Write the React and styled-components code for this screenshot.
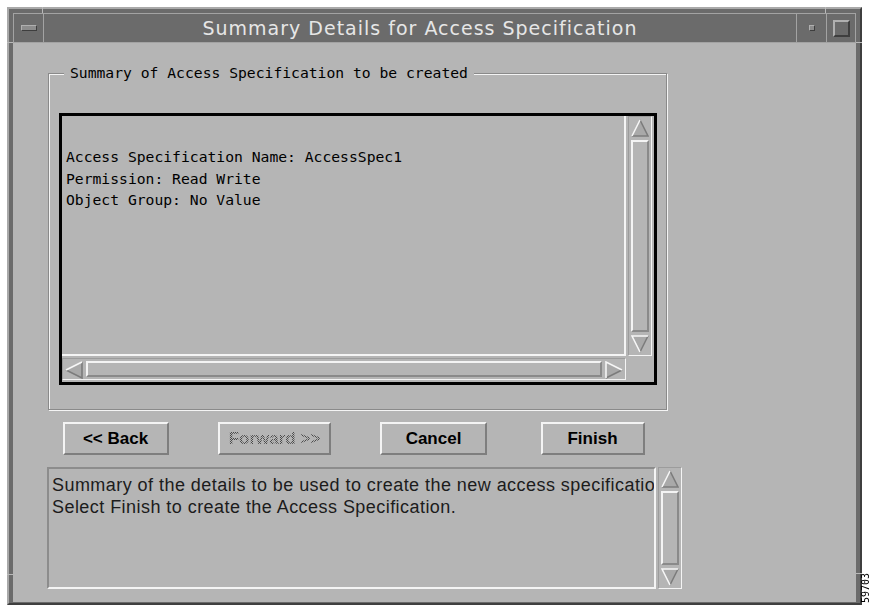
import React from "react";
import styled, { createGlobalStyle } from "styled-components";

const GlobalStyle = createGlobalStyle`
  html, body {
    margin: 0;
    padding: 0;
    background: #ffffff;
    width: 870px;
    height: 605px;
    overflow: hidden;
  }
  #root { height: 100%; }
`;

const GRAY = "#b5b5b5";
const LIGHT = "#f4f4f4";
const SHADE = "#7e7e7e";

const Page = styled.div`
  display: flex;
  align-items: stretch;
  height: 605px;
  padding: 7px 0 0 7px;
  box-sizing: border-box;
`;

const Frame = styled.div`
  position: relative;
  width: 855px;
  box-sizing: border-box;
  display: flex;
  flex-direction: column;
  background: #6b6b6b;
  border-style: solid;
  border-width: 2px;
  border-color: #a9a9a9 #3f3f3f #3f3f3f #a9a9a9;
  padding: 4px 4px 1px 4px;
`;

/* resize-handle notches cut into the window border */
const Notch = styled.span`
  position: absolute;
  background: #b9b9b9;
  width: ${(p) => (p.$h ? "6px" : "1px")};
  height: ${(p) => (p.$h ? "1px" : "6px")};
`;

const TitleBar = styled.div`
  display: flex;
  height: 30px;
  box-sizing: border-box;
  border: 1px solid #a3a3a3;
  background: #6b6b6b;
`;

const WinButton = styled.div`
  width: ${(p) => p.$w}px;
  flex: none;
  display: flex;
  align-items: center;
  justify-content: center;
  border-left: ${(p) => (p.$sepLeft ? "1px solid #a3a3a3" : "none")};
  border-right: ${(p) => (p.$sepRight ? "1px solid #a3a3a3" : "none")};
`;

const Raised = styled.div`
  box-sizing: border-box;
  width: ${(p) => p.$w}px;
  height: ${(p) => p.$h}px;
  background: ${(p) => p.$fill || "#6b6b6b"};
  border-style: solid;
  border-width: ${(p) => p.$bw || 1}px;
  border-color: #b0b0b0 #3e3e3e #3e3e3e #b0b0b0;
`;

const Title = styled.div`
  flex: 1;
  text-align: center;
  font-family: "DejaVu Sans", "Liberation Sans", sans-serif;
  font-size: 19px;
  letter-spacing: 1px;
  line-height: 28px;
  color: #e6e6e6;
  white-space: nowrap;
`;

const Body = styled.div`
  flex: 1;
  background: ${GRAY};
  display: flex;
  flex-direction: column;
  align-items: flex-start;
  padding-top: 22px;
`;

const Group = styled.fieldset`
  margin: 0 0 0 35px;
  min-width: 0;
  width: 619px;
  box-sizing: border-box;
  padding: 32px 9px 24px 10px;
  border: 1px solid #8a8a8a;
  box-shadow: inset 1px 1px ${LIGHT}, 1px 1px ${LIGHT};
`;

const Legend = styled.legend`
  margin-left: 5px;
  padding: 0 6px;
  background: ${GRAY};
  font-family: "DejaVu Sans Mono", "Liberation Mono", monospace;
  font-size: 14.7px;
  line-height: 16px;
  color: #000;
`;

const ListBox = styled.div`
  width: 598px;
  height: 272px;
  box-sizing: border-box;
  border: 3px solid #000;
  display: grid;
  grid-template-columns: 564px 24px;
  grid-template-rows: 240px 22px;
  gap: 2px;
  padding: 0 2px 2px 0;
`;

const ListText = styled.div`
  box-sizing: border-box;
  border-right: 2px solid ${LIGHT};
  border-bottom: 2px solid ${LIGHT};
  padding: 30px 0 0 4px;
  font-family: "DejaVu Sans Mono", "Liberation Mono", monospace;
  font-size: 14.7px;
  line-height: 21.5px;
  color: #000;
  white-space: pre;
  overflow: hidden;
`;

const Corner = styled.div``;

const Trough = styled.div`
  box-sizing: border-box;
  display: flex;
  flex-direction: ${(p) => (p.$horizontal ? "row" : "column")};
  gap: 3px;
  padding: 2px;
  background: ${GRAY};
  border-style: solid;
  border-width: 1px;
  border-color: #9c9c9c ${LIGHT} ${LIGHT} #9c9c9c;
`;

const Thumb = styled.div`
  flex: 1;
  box-sizing: border-box;
  background: ${GRAY};
  border-style: solid;
  border-width: 2px;
  border-color: ${LIGHT} #8a8a8a #8a8a8a ${LIGHT};
`;

const ArrowBox = styled.svg`
  flex: none;
  display: block;
  width: 18px;
  height: 18px;
`;

const ARROWS = {
  up: { pts: "9,1 17,17 1,17", light: ["1,17 9,1"], dark: ["9,1 17,17 1,17"] },
  down: { pts: "1,1 17,1 9,17", light: ["9,17 1,1 17,1"], dark: ["17,1 9,17"] },
  left: { pts: "1,9 17,1 17,17", light: ["1,9 17,1"], dark: ["17,1 17,17 1,9"] },
  right: { pts: "1,1 17,9 1,17", light: ["1,17 1,1 17,9"], dark: ["17,9 1,17"] },
};

function Arrow({ dir }) {
  const a = ARROWS[dir];
  return (
    <ArrowBox viewBox="0 0 18 18">
      <polygon points={a.pts} fill="#a9a9a9" />
      {a.dark.map((p) => (
        <polyline key={p} points={p} fill="none" stroke="#7c7c7c" strokeWidth="1.6" />
      ))}
      {a.light.map((p) => (
        <polyline key={p} points={p} fill="none" stroke="#f6f6f6" strokeWidth="1.6" />
      ))}
    </ArrowBox>
  );
}

function ScrollBar({ horizontal }) {
  return (
    <Trough $horizontal={horizontal}>
      <Arrow dir={horizontal ? "left" : "up"} />
      <Thumb />
      <Arrow dir={horizontal ? "right" : "down"} />
    </Trough>
  );
}

const ButtonRow = styled.div`
  margin: 12px 0 0 23px;
  display: grid;
  grid-template-columns: repeat(4, 159px);
`;

const PushButton = styled.button`
  justify-self: center;
  width: ${(p) => p.$w}px;
  height: 33px;
  box-sizing: border-box;
  padding: 0;
  background: ${GRAY};
  border-style: solid;
  border-width: 2px;
  border-color: ${LIGHT} ${SHADE} ${SHADE} ${LIGHT};
  font-family: "Liberation Sans", Arial, sans-serif;
  font-weight: bold;
  font-size: 17px;
  color: #000;
`;

const Stippled = styled.span`
  background-image: repeating-conic-gradient(#4a4a4a 0 25%, transparent 0 50%);
  background-size: 2px 2px;
  -webkit-background-clip: text;
  background-clip: text;
  color: transparent;
`;

const MessageBox = styled.div`
  margin: 12px 0 0 34px;
  width: 635px;
  height: 122px;
  display: grid;
  grid-template-columns: 609px 24px;
  gap: 2px;
`;

const MessageText = styled.div`
  box-sizing: border-box;
  border-style: solid;
  border-width: 2px;
  border-color: #8c8c8c ${LIGHT} ${LIGHT} #8c8c8c;
  padding: 5px 0 0 3px;
  font-family: "Liberation Sans", Arial, sans-serif;
  font-size: 18px;
  letter-spacing: 0.45px;
  line-height: 22px;
  color: #1c1c1c;
  white-space: nowrap;
  overflow: hidden;
`;

const SideNote = styled.div`
  align-self: flex-end;
  writing-mode: vertical-rl;
  transform: rotate(180deg);
  font-family: "DejaVu Sans Mono", monospace;
  font-size: 10px;
  line-height: 8px;
  color: #000;
  margin: 0 0 2px 0;
`;

export default function App() {
  return (
    <>
      <GlobalStyle />
      <Page>
        <Frame>
          <Notch style={{ left: 33, top: -2 }} />
          <Notch style={{ left: 816, top: -2 }} />
          <Notch $h style={{ left: -2, top: 33 }} />
          <Notch $h style={{ right: -2, top: 33 }} />
          <Notch $h style={{ left: -2, top: 565 }} />
          <Notch $h style={{ right: -2, top: 564 }} />
          <TitleBar>
            <WinButton $w={29} $sepRight>
              <Raised $w={16} $h={6} $fill="#8c8c8c" />
            </WinButton>
            <Title>Summary Details for Access Specification</Title>
            <WinButton $w={29} $sepLeft>
              <Raised $w={6} $h={6} $fill="#8c8c8c" />
            </WinButton>
            <WinButton $w={28} $sepLeft>
              <Raised $w={17} $h={17} $bw={2} />
            </WinButton>
          </TitleBar>
          <Body>
            <Group>
              <Legend>Summary of Access Specification to be created</Legend>
              <ListBox>
                <ListText>
                  {"Access Specification Name: AccessSpec1\nPermission: Read Write\nObject Group: No Value"}
                </ListText>
                <ScrollBar />
                <ScrollBar horizontal />
                <Corner />
              </ListBox>
            </Group>
            <ButtonRow>
              <PushButton $w={106}>&lt;&lt; Back</PushButton>
              <PushButton $w={113} disabled>
                <Stippled>Forward &gt;&gt;</Stippled>
              </PushButton>
              <PushButton $w={107}>Cancel</PushButton>
              <PushButton $w={104}>Finish</PushButton>
            </ButtonRow>
            <MessageBox>
              <MessageText>
                Summary of the details to be used to create the new access specificatio
                <br />
                Select Finish to create the Access Specification.
              </MessageText>
              <ScrollBar />
            </MessageBox>
          </Body>
        </Frame>
        <SideNote>59703</SideNote>
      </Page>
    </>
  );
}
